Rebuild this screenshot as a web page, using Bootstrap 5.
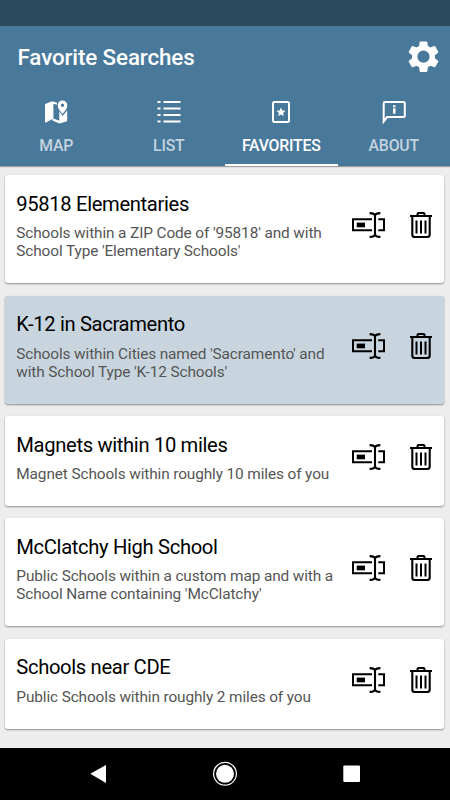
<!DOCTYPE html>
<html lang="en">
<head>
<meta charset="utf-8">
<meta name="viewport" content="width=device-width, initial-scale=1">
<title>Favorite Searches</title>
<link rel="stylesheet" href="https://cdn.jsdelivr.net/npm/bootstrap@5.3.0/dist/css/bootstrap.min.css">
<style>
body{font-family:Roboto,"Liberation Sans",sans-serif;background:#ededed;height:800px;overflow:hidden}
svg{display:block;flex:none}
.status-strip{height:26px;background:#2d495e}
.app-head{height:140px;background:#48799b;box-shadow:0 1px 1px #0005}
.title-bar{height:63px;padding:0 10px 2px 17.5px}
.title-bar h1{font-size:22.4px;font-weight:500;line-height:28px;letter-spacing:-.12px}
.tab-row{height:77px}
.tab-row .nav-link{padding:10px 0 0;height:77px;border-radius:0;color:#c3d3df;font-size:15.8px;font-weight:500;line-height:20px;letter-spacing:-.2px;border-bottom:2.5px solid transparent}
.tab-row .nav-link svg{color:#fff;margin:0 auto 11px}
.tab-row .nav-link.active{color:#fff;border-bottom-color:#fff}
.saved{gap:12.5px;padding:9px 5.8px 0 5.3px}
.saved .card{height:108px;border:0;border-radius:3px;box-shadow:0 1px 2px #0006;padding:16.5px 12.5px 8px 11px;color:#000}
.saved .card.brief{height:89.8px}
.saved .card.picked{background:#c8d5de}
.saved h2{font-size:20.2px;font-weight:400;line-height:24px;letter-spacing:-.34px;margin:0 0 8.5px}
.saved p{font-size:15.4px;line-height:18px;letter-spacing:-.12px;color:#555;margin:0;white-space:nowrap}
.tools{gap:25px;margin-top:-16.5px}
.system-nav{height:52px;background:#000}
</style>
</head>
<body class="d-flex flex-column">
<svg width="0" height="0" class="position-absolute">
<symbol id="rename" viewBox="0 0 33 26"><path d="M20 7.3H1v11h19M26.3 7.3H32v11h-5.7" fill="none" stroke="currentColor" stroke-width="2"/><path d="M4.7 10.6H13v4.7H4.7z" fill="currentColor"/><path d="M17.6 1.1c3.300 0 5.400.8 5.400 3v17.800c0 2.200-2.100 3-5.400 3M28.400 1.100c-3.300 0-5.400.8-5.400 3v17.800c0 2.200 2.100 3 5.400 3" fill="none" stroke="currentColor" stroke-width="2.100"/></symbol>
<symbol id="trash" viewBox="0 0 22 26"><path d="M0 4h22M7.500 3.500V2.200Q7.500 1 8.700 1h4.600q1.200 0 1.200 1.200v1.300M2.300 4v18.500q0 2.500 2.500 2.500h12.400q2.500 0 2.500-2.500V4" fill="none" stroke="currentColor" stroke-width="2.100"/><path d="M6.500 8.500v13M11 8.500v13M15.500 8.500v13" stroke="currentColor" stroke-width="2"/></symbol>
</svg>
<div class="status-strip flex-shrink-0"></div>
<header class="app-head flex-shrink-0">
<div class="title-bar d-flex align-items-center justify-content-between text-white">
<h1 class="m-0 pt-1 pb-1">Favorite Searches</h1>
<svg width="33" height="33" viewBox="1.2 1.1 21.6 21.6"><path fill="currentColor" d="M19.430 12.980c.04-.32.07-.64.07-.98s-.03-.66-.07-.98l2.110-1.650c.19-.15.24-.42.12-.64l-2-3.460c-.12-.22-.39-.3-.61-.22l-2.490 1c-.52-.4-1.080-.73-1.690-.98l-.38-2.650C14.460 2.180 14.250 2 14 2h-4c-.25 0-.46.18-.49.42l-.38 2.650c-.61.25-1.170.59-1.690.98l-2.490-1c-.23-.09-.49 0-.61.22l-2 3.460c-.13.22-.07.49.12.64l2.110 1.650c-.04.32-.07.65-.07.98s.03.66.07.98l-2.110 1.650c-.19.15-.24.42-.12.64l2 3.460c.12.22.39.3.61.22l2.490-1c.52.4 1.080.73 1.690.98l.38 2.650c.03.24.24.42.49.42h4c.25 0 .46-.18.49-.42l.38-2.650c.61-.25 1.170-.59 1.690-.98l2.490 1c.23.09.49 0 .61-.22l2-3.460c.12-.22.07-.49-.12-.64l-2.110-1.650zM12 16a4 4 0 1 1 0-8 4 4 0 0 1 0 8z"/></svg>
</div>
<nav class="nav nav-fill nav-justified tab-row">
<a class="nav-link" href="#"><svg width="26" height="26" viewBox="0 0 26 26" fill="currentColor"><path d="M2 6q0-.9.800-1.200L9 2.200l5 1.500v2l-3.600-1v14.800L3.100 23.400Q2 23.900 2 22.700z"/><path d="M9.500 19.200l6.800 2.500v-9.400l3.200 4.700 4.700-5.400v9.600q0 .9-.8 1.200l-6 1.900q-.8.300-1.600 0l-6.300-2.700z"/><path d="M19.500 1.600a4.800 4.800 0 0 0-4.800 4.900c0 3.200 2.300 5.400 4.800 8.400 2.600-3 4.800-5.200 4.800-8.400a4.800 4.800 0 0 0-4.800-4.900zm0 3a1.700 1.700 0 1 1 0 3.400 1.700 1.700 0 0 1 0-3.400z"/></svg>MAP</a>
<a class="nav-link" href="#"><svg width="26" height="26" viewBox="0 0 26 26" fill="none" stroke="currentColor" stroke-width="2"><path d="M1.500 3h3M1.500 9.500h3M1.500 16h3M1.500 22.500h3M7.500 3h17M7.500 9.500h17M7.500 16h17M7.500 22.500h17"/></svg>LIST</a>
<a class="nav-link active" href="#"><svg width="26" height="26" viewBox="0 0 26 26"><rect x="5" y="3" width="16" height="20" rx="1.5" fill="none" stroke="currentColor" stroke-width="2"/><path fill="currentColor" d="m13 8.500 1.300 3 3.200.3-2.400 2.100.7 3.200-2.800-1.700-2.800 1.700.7-3.200-2.400-2.100 3.200-.3z"/></svg>FAVORITES</a>
<a class="nav-link" href="#"><svg width="26" height="26" viewBox="0 0 26 26"><path d="M2.700 22.500V4.300Q2.700 3 4 3h18.500q1.300 0 1.300 1.300v12.400q0 1.300-1.300 1.300H6.200z" fill="none" stroke="currentColor" stroke-width="2"/><path fill="currentColor" d="M12 6.200h2.500v2H12zM12 9.300h2.500v5.500H12z"/></svg>ABOUT</a>
</nav>
</header>
<main class="saved d-flex flex-column flex-grow-1">
<article class="card flex-row justify-content-between"><div><h2>95818 Elementaries</h2><p>Schools within a ZIP Code of '95818' and with<br>School Type 'Elementary Schools'</p></div><div class="tools d-flex align-items-center"><svg width="33" height="26"><use href="#rename"/></svg><svg width="22" height="26"><use href="#trash"/></svg></div></article>
<article class="card picked flex-row justify-content-between"><div><h2>K-12 in Sacramento</h2><p>Schools within Cities named 'Sacramento' and<br>with School Type 'K-12 Schools'</p></div><div class="tools d-flex align-items-center"><svg width="33" height="26"><use href="#rename"/></svg><svg width="22" height="26"><use href="#trash"/></svg></div></article>
<article class="card brief flex-row justify-content-between"><div><h2>Magnets within 10 miles</h2><p>Magnet Schools within roughly 10 miles of you</p></div><div class="tools d-flex align-items-center"><svg width="33" height="26"><use href="#rename"/></svg><svg width="22" height="26"><use href="#trash"/></svg></div></article>
<article class="card flex-row justify-content-between"><div><h2>McClatchy High School</h2><p>Public Schools within a custom map and with a<br>School Name containing 'McClatchy'</p></div><div class="tools d-flex align-items-center"><svg width="33" height="26"><use href="#rename"/></svg><svg width="22" height="26"><use href="#trash"/></svg></div></article>
<article class="card brief flex-row justify-content-between"><div><h2>Schools near CDE</h2><p>Public Schools within roughly 2 miles of you</p></div><div class="tools d-flex align-items-center"><svg width="33" height="26"><use href="#rename"/></svg><svg width="22" height="26"><use href="#trash"/></svg></div></article>
</main>
<footer class="system-nav flex-shrink-0">
<svg width="450" height="52" viewBox="0 0 450 52" fill="#fff"><path d="M90.300 25.800 106 17v18z"/><circle cx="225" cy="25.800" r="9"/><circle cx="225" cy="25.800" r="11.400" fill="none" stroke="#fff" stroke-width="1.200"/><rect x="343.300" y="17.500" width="16.700" height="16.500" rx="1"/></svg>
</footer>
<script src="https://cdn.jsdelivr.net/npm/bootstrap@5.3.0/dist/js/bootstrap.bundle.min.js"></script>
</body>
</html>
